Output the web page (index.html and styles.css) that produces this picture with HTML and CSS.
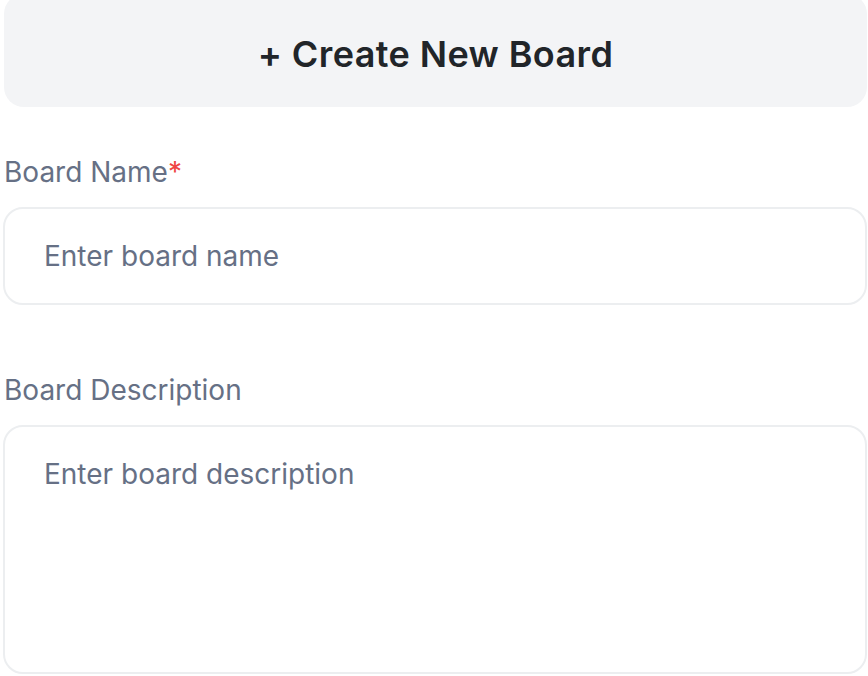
FILE: index.html
```html
<!DOCTYPE html>
<html lang="en">
<head>
<meta charset="utf-8">
<title>Create New Board</title>
<link rel="stylesheet" href="styles.css">
</head>
<body>
<div class="panel">
  <div class="panel-head">
    <h1 class="panel-title">+ Create New Board</h1>
  </div>
  <form class="board-form">
    <div class="field">
      <label class="field-label" for="bname">Board Name<span class="req">*</span></label>
      <input class="field-input" id="bname" type="text" placeholder="Enter board name">
    </div>
    <div class="field">
      <label class="field-label" for="bdesc">Board Description</label>
      <textarea class="field-input field-area" id="bdesc" placeholder="Enter board description"></textarea>
    </div>
  </form>
</div>
</body>
</html>
```

FILE: styles.css
```css
* { box-sizing: border-box; }
html, body {
  margin: 0;
  padding: 0;
  background: #ffffff;
  font-family: Inter, "Noto Sans", "Liberation Sans", sans-serif;
  overflow: hidden;
}
.panel {
  padding: 0 1px 0 3px;
}
.panel-head {
  margin: -6px 0 0 1px;
  height: 113px;
  background: #f3f4f6;
  border-radius: 20px;
  display: flex;
  align-items: center;
  justify-content: center;
  padding-top: 6px;
}
.panel-title {
  margin: 0;
  font-size: 36px;
  font-weight: 600;
  color: #212529;
  letter-spacing: 0.4px;
}
.board-form {
  display: flex;
  flex-direction: column;
  gap: 64px;
  padding-top: 44px;
}
.field {
  display: flex;
  flex-direction: column;
  gap: 14px;
}
.field-label {
  font-size: 28px;
  line-height: 42px;
  font-weight: 400;
  color: #667085;
  padding-left: 1px;
}
.req {
  color: #ef4444;
}
.field-input {
  width: 100%;
  height: 98px;
  border: 2px solid #eceef0;
  border-radius: 20px;
  padding: 0 24px 0 39px;
  font-family: inherit;
  font-size: 28px;
  line-height: 42px;
  color: #212529;
  background: #fff;
  outline: none;
}
.field-input::placeholder {
  color: #667085;
  opacity: 1;
}
.field-area {
  height: 249px;
  padding-top: 26px;
  resize: none;
  display: block;
}
```
